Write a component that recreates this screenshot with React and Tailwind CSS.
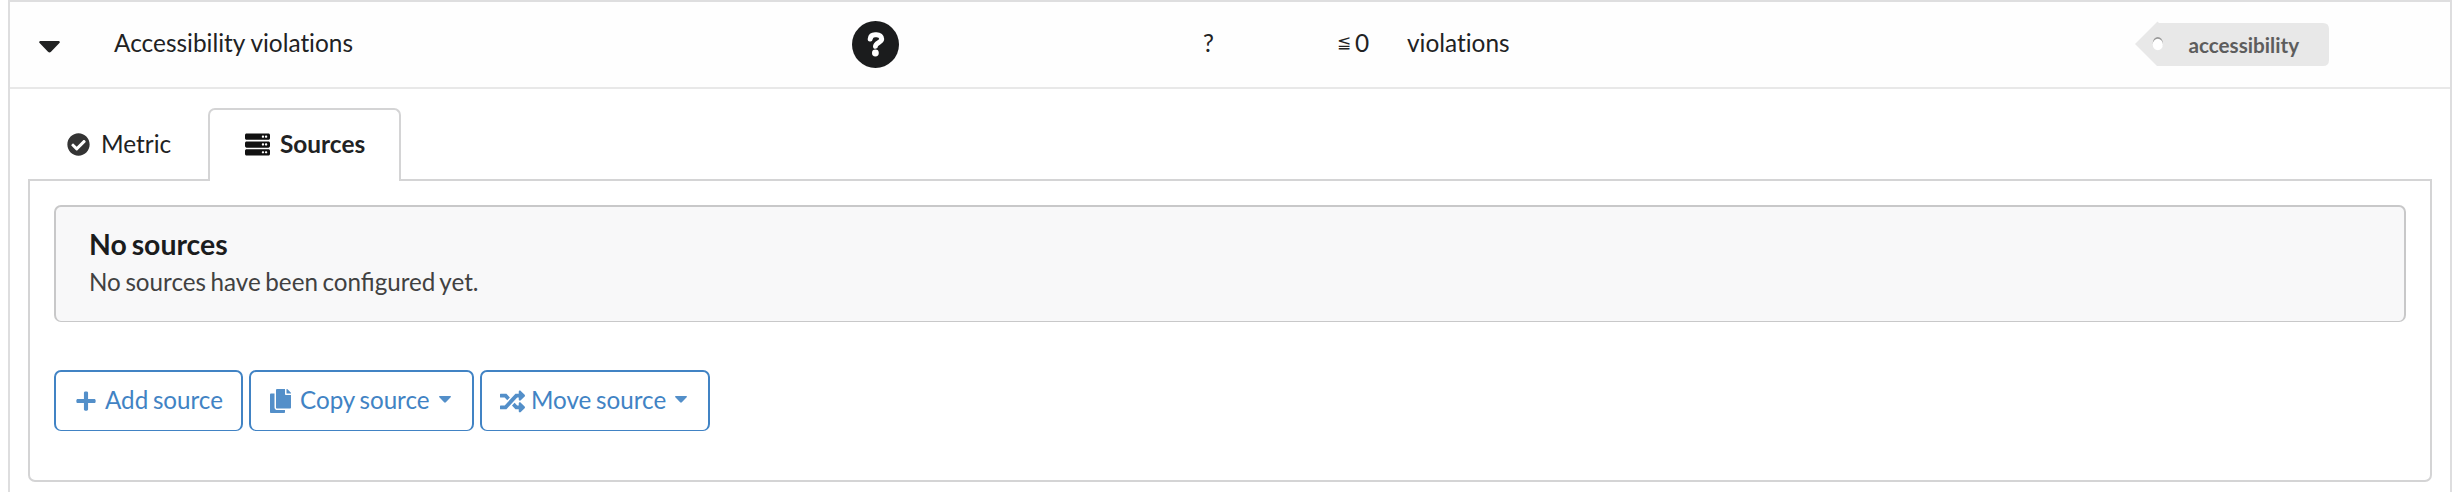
import { FaCheckCircle, FaCopy, FaPlus, FaRandom, FaServer } from "react-icons/fa";

function Caret({ className }) {
  return (
    <svg viewBox="0 0 21 12" className={className} fill="currentColor">
      <path d="M1.2 0H19.8Q21.6 .6 20.4 2L12 10.8Q10.5 12.4 9 10.8L.6 2Q-.6 .6 1.2 0Z" />
    </svg>
  );
}

function QuestionCircle({ className }) {
  return (
    <svg viewBox="0 0 47 47" className={className}>
      <circle cx="23.5" cy="23.5" r="23.5" fill="#1b1c1d" />
      <path d="M18.2 18C18.6 15 20.6 13.8 23 13.8H24.6C27.6 13.8 29.7 15.6 29.7 18.1C29.7 21.4 23.6 21.8 23.5 25.2" fill="none" stroke="#fff" strokeWidth="5" strokeLinecap="round" />
      <circle cx="23.4" cy="32" r="3.4" fill="#fff" />
    </svg>
  );
}

function Tag() {
  return (
    <svg viewBox="0 0 196 46" className="mt-[19px] h-[46px] w-[196px]">
      <path d="M0 23L22.5 .5L24 2H188Q194 2 194 8V39Q194 45 188 45H22Z" fill="#e8e8e8" />
      <ellipse cx="22.8" cy="22" rx="5" ry="6" fill="#999" />
      <ellipse cx="22.8" cy="23.5" rx="5.1" ry="5.7" fill="#fff" />
      <text x="53.5" y="32" fontSize="20.7" fontWeight="700" fill="#5d5d5d">accessibility</text>
    </svg>
  );
}

function MetricRow() {
  return (
    <div className="flex h-[87px] items-start border-b-2 border-[#e8e8e8] bg-[#fefefe] text-[24.4px] leading-[30px] text-[#212223] [font-variant-ligatures:none]">
      <Caret className="ml-[29px] mt-[39px] h-3 w-[21px]" />
      <span className="ml-[54px] mt-[26px] w-[738px]">Accessibility violations</span>
      <QuestionCircle className="mt-[19px] size-[47px]" />
      <span className="ml-[304px] mt-[26px] w-[134px]">?</span>
      <span className="mt-[26px] flex w-[70px]">
        <span className="-mt-px w-[18px] text-[17px]">≦</span>
        <span>0</span>
      </span>
      <span className="mt-[26px] w-[728px]">violations</span>
      <Tag />
    </div>
  );
}

function Tabs() {
  return (
    <div className="relative z-10 ml-[18px] -mb-[2px] mt-[19px] flex h-[73px] text-[24.4px] leading-[30px] text-[#212223]">
      <div className="flex w-[180px] items-center pl-[39px]">
        <FaCheckCircle className="size-[23px] text-[#343434]" />
        <span className="-mt-[2px] ml-[11px]">Metric</span>
      </div>
      <div className="flex w-[193px] items-center rounded-t-[7px] border-2 border-b-0 border-[#d4d4d5] bg-white pb-[2px] pl-[35px] font-bold">
        <FaServer className="size-[25px] text-[#111]" />
        <span className="-mt-[2px] ml-[10px]">Sources</span>
      </div>
    </div>
  );
}

function Button({ icon, label, caret, className }) {
  return (
    <button className={"flex h-[61px] items-center rounded-[7px] border-2 border-b border-[#4183c4] text-[24.2px] leading-[30px] text-[#4183c4] [word-spacing:-1.5px] " + className}>
      {icon}
      <span className="-mt-[3px] whitespace-nowrap">{label}</span>
      {caret && <Caret className="mb-[4px] ml-[9px] h-[7px] w-[12px] opacity-90" />}
    </button>
  );
}

export default function App() {
  return (
    <div className="h-[492px] w-[2464px] overflow-hidden bg-white pl-2 font-[Lato,sans-serif]">
      <div className="h-[492px] w-[2444px] border-x-2 border-t-2 border-[#dededf]">
        <MetricRow />
        <Tabs />
        <div className="ml-[18px] h-[303px] w-[2404px] rounded-b-[7px] border-2 border-[#d4d4d5] bg-white pl-6 pt-6">
          <div className="h-[117px] w-[2352px] rounded-[7px] border-2 border-b border-[#c8c8c9] bg-[#f8f8f9] pl-[33px] pt-[19px]">
            <h2 className="text-[28.4px] font-bold leading-[36px] text-[#1b1c1d] [word-spacing:-2px]">No sources</h2>
            <p className="text-[24.2px] leading-[40px] text-[#414141] [word-spacing:-1.6px]">No sources have been configured yet.</p>
          </div>
          <div className="mt-12 flex gap-[6px]">
            <Button className="w-[189px] pl-[19px]" icon={<FaPlus className="mr-2 size-[22px] opacity-90" />} label="Add source" />
            <Button className="w-[225px] pl-[19px]" caret icon={<FaCopy className="mr-[9px] h-[24px] w-[21px] opacity-90" />} label="Copy source" />
            <Button className="w-[230px] pl-[18px]" caret icon={<FaRandom className="mr-[6px] size-[25px] opacity-90" />} label="Move source" />
          </div>
        </div>
      </div>
    </div>
  );
}
